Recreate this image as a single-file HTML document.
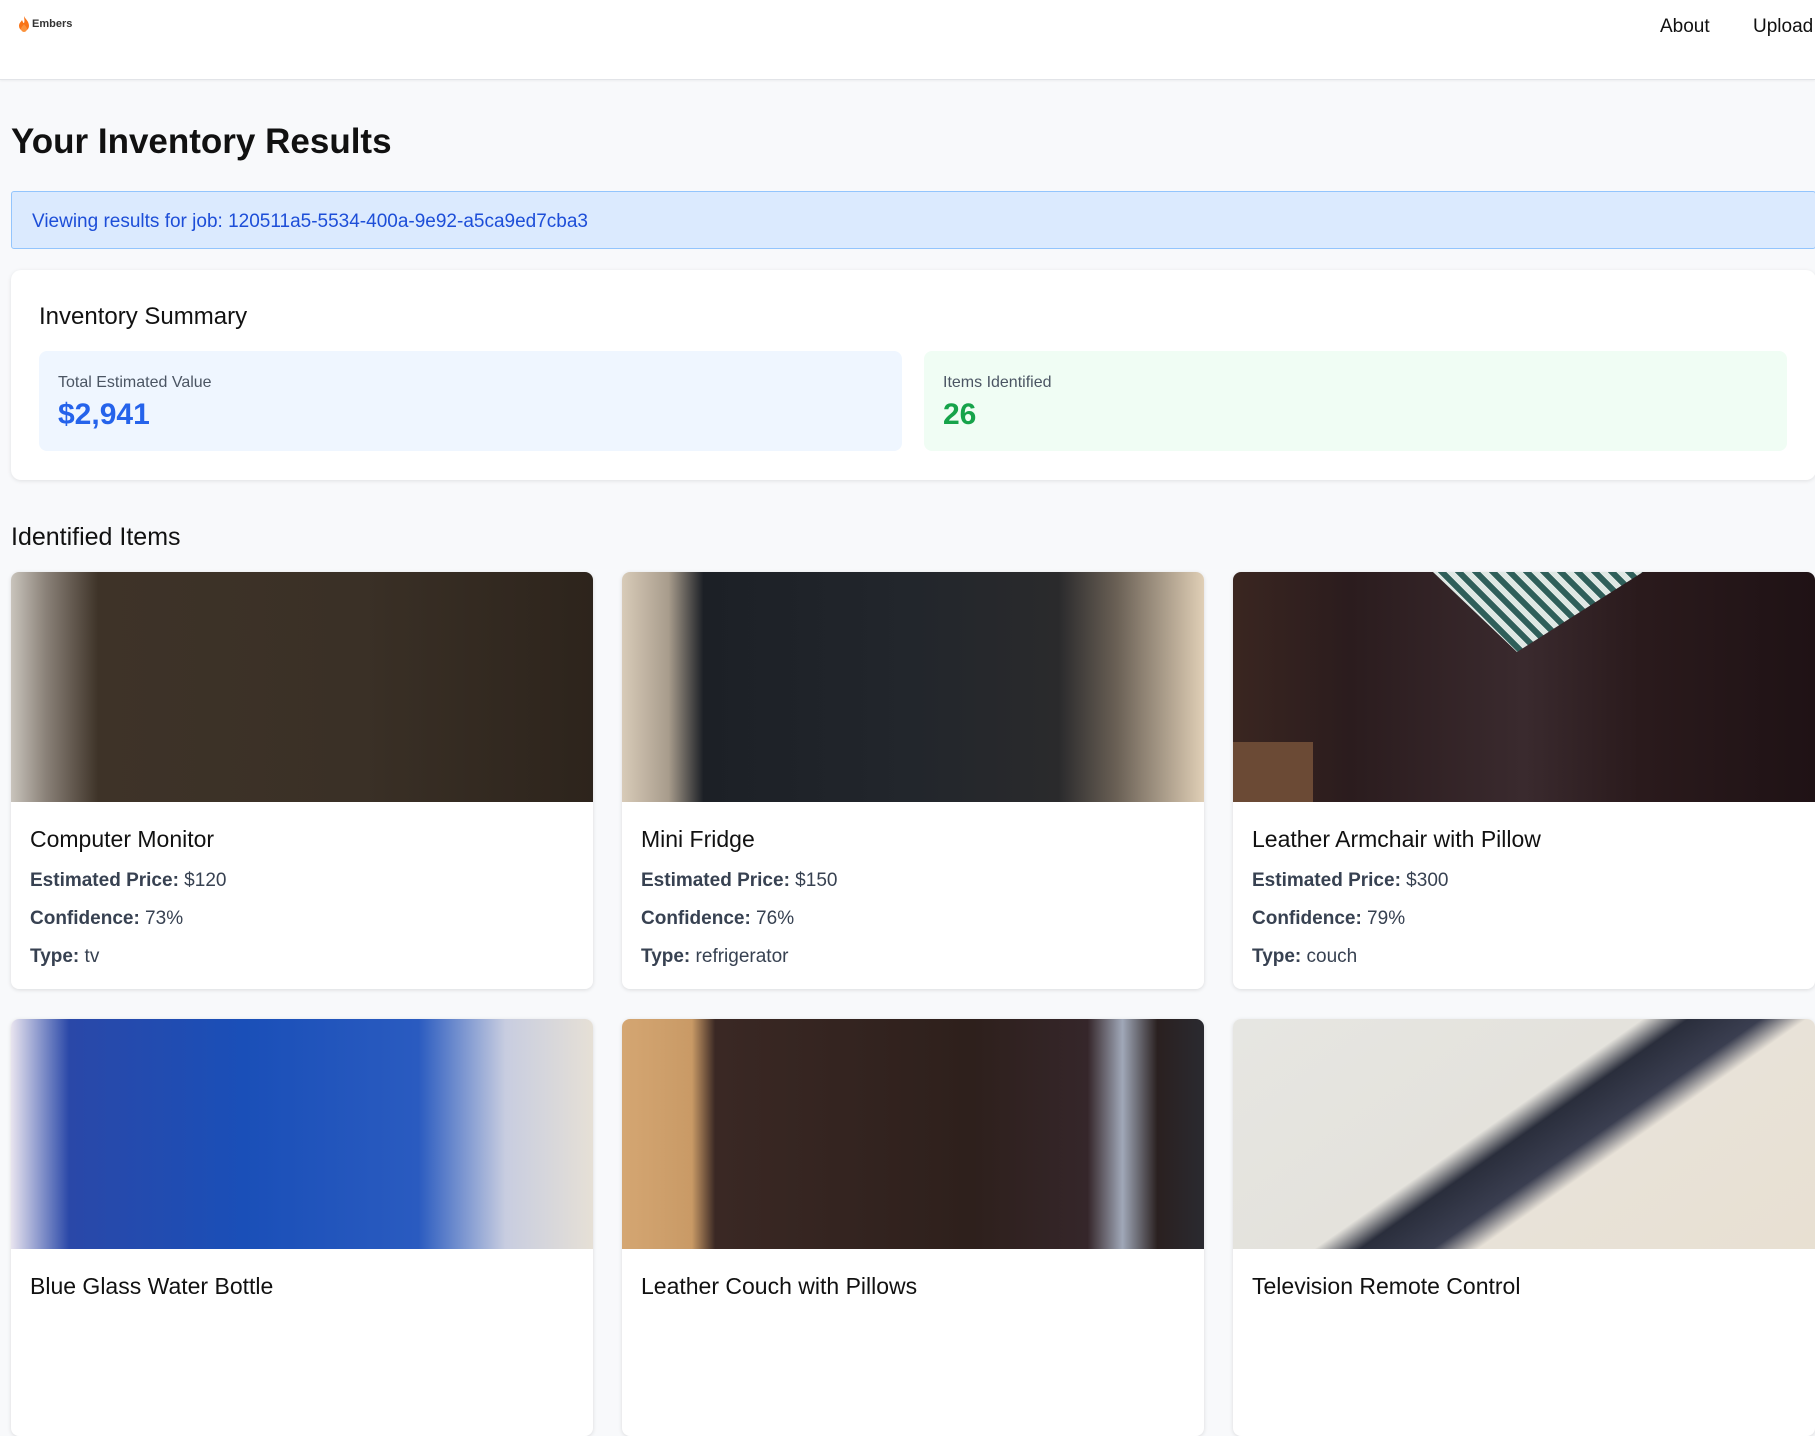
<!DOCTYPE html>
<html><head><meta charset="utf-8"><style>
*{box-sizing:border-box;margin:0;padding:0}
body{width:1815px;height:1311px;overflow:hidden;background:#f8f9fb;font-family:"Liberation Sans",sans-serif;color:#111;position:relative}
.hdr{position:absolute;left:0;top:0;width:1815px;height:80px;background:#fff;border-bottom:1px solid #e2e4e8;box-shadow:0 1px 2px rgba(0,0,0,.05)}
.logo{position:absolute;left:18px;top:16px;font-size:11px;color:#333;display:flex;align-items:center;gap:2px;font-weight:bold}
.nav{position:absolute;top:16px;font-size:19px;color:#111}
h1{position:absolute;left:11px;top:122px;font-size:35px;font-weight:bold}
.banner{position:absolute;left:11px;top:191px;width:1805px;height:58px;background:#dbeafe;border:1px solid #93c5fd;border-radius:3px;color:#1d4ed8;font-size:19px;padding:19px 0 0 20px}
.sum{position:absolute;left:11px;top:270px;width:1805px;height:210px;background:#fff;border-radius:10px;box-shadow:0 1px 4px rgba(0,0,0,.1)}
.sum h2{position:absolute;left:28px;top:33px;font-size:24px;font-weight:normal}
.stat{position:absolute;top:81px;width:863px;height:100px;border-radius:8px;padding:23px 0 0 19px}
.stat .l{font-size:16px;color:#4b5563}
.stat .v{font-size:30px;font-weight:bold;margin-top:6px}
h3{position:absolute;left:11px;top:523px;font-size:25px;font-weight:normal}
.card{position:absolute;width:582px;height:417px;background:#fff;border-radius:8px;overflow:hidden;box-shadow:0 1px 4px rgba(0,0,0,.12)}
.img{height:230px}
.t{position:absolute;left:19px;top:254px;font-size:23px}
.p{position:absolute;left:19px;font-size:19px;color:#374151}
.p b{color:#374151}
</style></head><body>
<div class="hdr">
<div class="logo"><svg width="12" height="16" viewBox="0 0 12 16"><path d="M6 0C7 3 11 5 11 10a5 5 0 0 1-10 0C1 7 3 6 4 4c1 2 1 3 2 3C7 5 6 2 6 0z" fill="#f97316"/><path d="M6 8c1 2 3 3 3 5a3 3 0 0 1-6 0c0-2 2-3 3-5z" fill="#fb923c"/></svg><span>Embers</span></div>
<div class="nav" style="left:1660px">About</div>
<div class="nav" style="left:1753px">Upload</div>
</div>
<h1>Your Inventory Results</h1>
<div class="banner">Viewing results for job: 120511a5-5534-400a-9e92-a5ca9ed7cba3</div>
<div class="sum"><h2>Inventory Summary</h2>
<div class="stat" style="left:28px;background:#eff6ff"><div class="l">Total Estimated Value</div><div class="v" style="color:#2563eb">$2,941</div></div>
<div class="stat" style="left:913px;background:#f0fdf4"><div class="l">Items Identified</div><div class="v" style="color:#16a34a">26</div></div>
</div>
<h3>Identified Items</h3>

<div class="card" style="left:11px;top:572px"><div class="img" style="background:linear-gradient(90deg,#c9c4bc 0,#8a8178 6%,#3e3328 15%,#3a3026 60%,#2d241c 100%)"></div>
<div class="t">Computer Monitor</div><div class="p" style="top:298px"><b>Estimated Price:</b> $120</div><div class="p" style="top:336px"><b>Confidence:</b> 73%</div><div class="p" style="top:374px"><b>Type:</b> tv</div></div>

<div class="card" style="left:622px;top:572px"><div class="img" style="background:linear-gradient(90deg,#d8cbb8 0,#a89c8c 8%,#1c2026 14%,#22262c 50%,#2a2a2c 75%,#6a6055 85%,#e0cfb6 100%)"></div>
<div class="t">Mini Fridge</div><div class="p" style="top:298px"><b>Estimated Price:</b> $150</div><div class="p" style="top:336px"><b>Confidence:</b> 76%</div><div class="p" style="top:374px"><b>Type:</b> refrigerator</div></div>

<div class="card" style="left:1233px;top:572px"><div class="img" style="background:linear-gradient(90deg,#3a2620 0,#2b1c1e 20%,#3a2a2e 50%,#2a1a1c 70%,#1f1215 100%);position:relative"><div style="position:absolute;left:200px;top:0;width:210px;height:80px;background:repeating-linear-gradient(45deg,#2f5f5a 0 6px,#dfe8e4 6px 12px);clip-path:polygon(0 0,100% 0,40% 100%)"></div><div style="position:absolute;left:0;top:170px;width:80px;height:60px;background:#6b4a35"></div></div>
<div class="t">Leather Armchair with Pillow</div><div class="p" style="top:298px"><b>Estimated Price:</b> $300</div><div class="p" style="top:336px"><b>Confidence:</b> 79%</div><div class="p" style="top:374px"><b>Type:</b> couch</div></div>

<div class="card" style="left:11px;top:1019px"><div class="img" style="background:linear-gradient(90deg,#e8e4ef 0,#2a48a8 10%,#1a4fb8 40%,#2a5bc0 70%,#c8cde0 85%,#e6e0d6 100%)"></div>
<div class="t">Blue Glass Water Bottle</div></div>

<div class="card" style="left:622px;top:1019px"><div class="img" style="background:linear-gradient(90deg,#d4a672 0,#c99a66 12%,#3a2824 16%,#2e201c 60%,#35262a 80%,#a0a8b8 86%,#2a2020 92%,#2a2a30 100%)"></div>
<div class="t">Leather Couch with Pillows</div></div>

<div class="card" style="left:1233px;top:1019px"><div class="img" style="background:linear-gradient(145deg,#e6e6e2 0,#e4e2dc 45%,#2a2e3c 50%,#3a3e50 58%,#e8e2d8 63%,#e8e0d2 100%)"></div>
<div class="t">Television Remote Control</div></div>
</body></html>
